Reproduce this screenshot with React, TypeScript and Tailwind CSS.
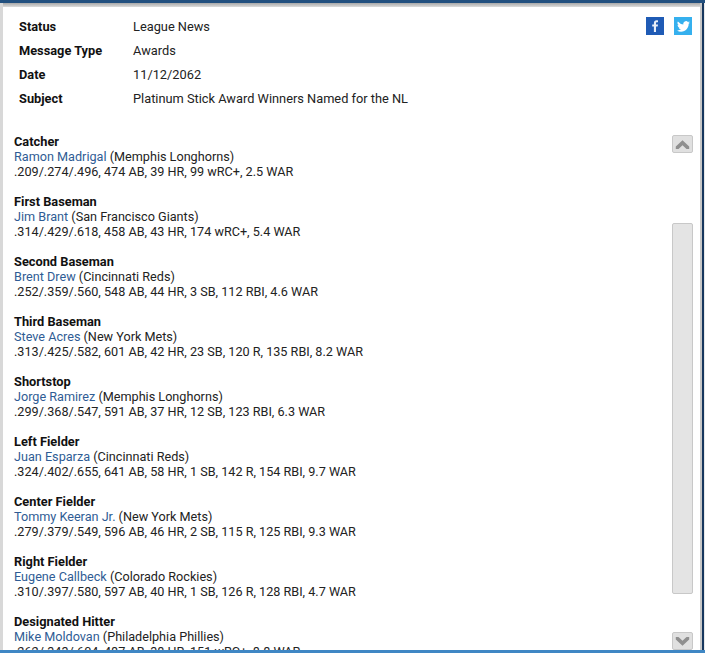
const headerRows = [
  ["Status", "League News"],
  ["Message Type", "Awards"],
  ["Date", "11/12/2062"],
  ["Subject", "Platinum Stick Award Winners Named for the NL"],
]

const winners = [
  { pos: "Catcher", name: "Ramon Madrigal", team: "(Memphis Longhorns)", line: ".209/.274/.496, 474 AB, 39 HR, 99 wRC+, 2.5 WAR" },
  { pos: "First Baseman", name: "Jim Brant", team: "(San Francisco Giants)", line: ".314/.429/.618, 458 AB, 43 HR, 174 wRC+, 5.4 WAR" },
  { pos: "Second Baseman", name: "Brent Drew", team: "(Cincinnati Reds)", line: ".252/.359/.560, 548 AB, 44 HR, 3 SB, 112 RBI, 4.6 WAR" },
  { pos: "Third Baseman", name: "Steve Acres", team: "(New York Mets)", line: ".313/.425/.582, 601 AB, 42 HR, 23 SB, 120 R, 135 RBI, 8.2 WAR" },
  { pos: "Shortstop", name: "Jorge Ramirez", team: "(Memphis Longhorns)", line: ".299/.368/.547, 591 AB, 37 HR, 12 SB, 123 RBI, 6.3 WAR" },
  { pos: "Left Fielder", name: "Juan Esparza", team: "(Cincinnati Reds)", line: ".324/.402/.655, 641 AB, 58 HR, 1 SB, 142 R, 154 RBI, 9.7 WAR" },
  { pos: "Center Fielder", name: "Tommy Keeran Jr.", team: "(New York Mets)", line: ".279/.379/.549, 596 AB, 46 HR, 2 SB, 115 R, 125 RBI, 9.3 WAR" },
  { pos: "Right Fielder", name: "Eugene Callbeck", team: "(Colorado Rockies)", line: ".310/.397/.580, 597 AB, 40 HR, 1 SB, 126 R, 128 RBI, 4.7 WAR" },
  { pos: "Designated Hitter", name: "Mike Moldovan", team: "(Philadelphia Phillies)", line: ".262/.343/.604, 487 AB, 38 HR, 151 wRC+, 8.8 WAR" },
]

export default function App() {
  return (
    <div className="flex h-[653px] w-[705px] flex-col overflow-hidden bg-[#d8d8d8] font-['Roboto',sans-serif] text-[12.8px] text-[#222]">
      {/* top edge of the window */}
      <div className="h-[3px] shrink-0 bg-[#22507f]" />
      <div className="flex h-[647px] shrink-0">
        <div className="w-[3px] shrink-0 bg-[#d8d8d8]" />
        <div className="flex w-[697px] shrink-0 flex-col">
          <div className="h-1 shrink-0 bg-gradient-to-b from-[#a8a8a8] to-[#dcdcdc]" />
          <div className="h-[643px] overflow-hidden bg-white">
            {/* message header */}
            <div className="flex justify-between pl-4 pr-2 pt-2">
              <div className="flex flex-col">
                {headerRows.map(([label, value]) => (
                  <div key={label} className="flex h-6 items-center">
                    <span className="w-[114px] font-bold text-[#111]">{label}</span>
                    <span>{value}</span>
                  </div>
                ))}
              </div>
              <div className="flex gap-[10px] pt-[2px]">
                <div className="flex h-[18px] w-[18px] items-center justify-center bg-[#1f5bb5]">
                  <svg width="8" height="12" viewBox="0 0 8 12">
                    <path d="M5 12V6.600h1.700L7 4.500H5V3.300c0-.6.2-1 1-1h1V.4C6.800.3 6.200.3 5.500.3 4 .3 2.900 1.200 2.900 3v1.500H1.200v2.100h1.700V12z" fill="#e8eef8" />
                  </svg>
                </div>
                <div className="flex h-[18px] w-[18px] items-center justify-center bg-[#35b0ee]">
                  <svg width="13" height="11" viewBox="0 0 24 20">
                    <path d="M24 2.400a9.800 9.800 0 0 1-2.800.8A4.900 4.900 0 0 0 23.300.500a9.800 9.800 0 0 1-3.100 1.200 4.900 4.900 0 0 0-8.400 4.500A14 14 0 0 1 1.700.900a4.900 4.900 0 0 0 1.500 6.600 4.900 4.900 0 0 1-2.200-.6 4.900 4.900 0 0 0 3.900 4.900 4.900 4.900 0 0 1-2.200.1 4.900 4.900 0 0 0 4.600 3.400A9.900 9.900 0 0 1 0 17.300 14 14 0 0 0 7.500 19.500c9.100 0 14.300-7.700 14-14.600A10 10 0 0 0 24 2.400z" fill="#ffffff" />
                  </svg>
                </div>
              </div>
            </div>

            {/* message body with its scrollbar */}
            <div className="mt-6 flex">
              <div className="-mt-px w-[669px] shrink-0 pl-[11px] text-[12.65px]">
                {winners.map((w) => (
                  <div key={w.pos} className="mb-[15px] leading-[15px]">
                    <div className="text-[12.8px] font-bold text-[#111]">{w.pos}</div>
                    <div>
                      <span className="text-[#2f5c94]">{w.name}</span> {w.team}
                    </div>
                    <div>{w.line}</div>
                  </div>
                ))}
              </div>

              <div className="flex h-[515px] w-[21px] shrink-0 flex-col">
                <div className="flex h-[18px] shrink-0 items-center justify-center rounded-[2px] border border-[#c8c8c8] bg-[#e0e0e0]">
                  <svg width="15" height="11" viewBox="0 0 15 11">
                    <path d="M.8 7.500 7.500 1.200 14.200 7.500 14.200 10 11.500 10 7.500 6.200 3.500 10 .8 10z" fill="#8f8f8f" />
                  </svg>
                </div>
                <div className="mt-[70px] h-[371px] shrink-0 rounded-[2px] border border-[#c8c8c8] bg-[#e4e4e4]" />
                <div className="mt-[38px] flex h-[18px] shrink-0 items-center justify-center rounded-[2px] border border-[#c8c8c8] bg-[#e0e0e0]">
                  <svg width="15" height="11" viewBox="0 0 15 11">
                    <path d="M.8 3.500 7.500 9.800 14.200 3.500 14.200 1 11.500 1 7.500 4.800 3.500 1 .8 1z" fill="#8f8f8f" />
                  </svg>
                </div>
              </div>
            </div>
          </div>
        </div>
        <div className="w-[2px] shrink-0 bg-[#c8c8c8]" />
        <div className="w-[2px] shrink-0 bg-[#17375e]" />
        <div className="w-px shrink-0 bg-[#e8e8e8]" />
      </div>
      {/* bottom edge of the window */}
      <div className="h-[3px] shrink-0 bg-[#3f87c4]" />
    </div>
  )
}
